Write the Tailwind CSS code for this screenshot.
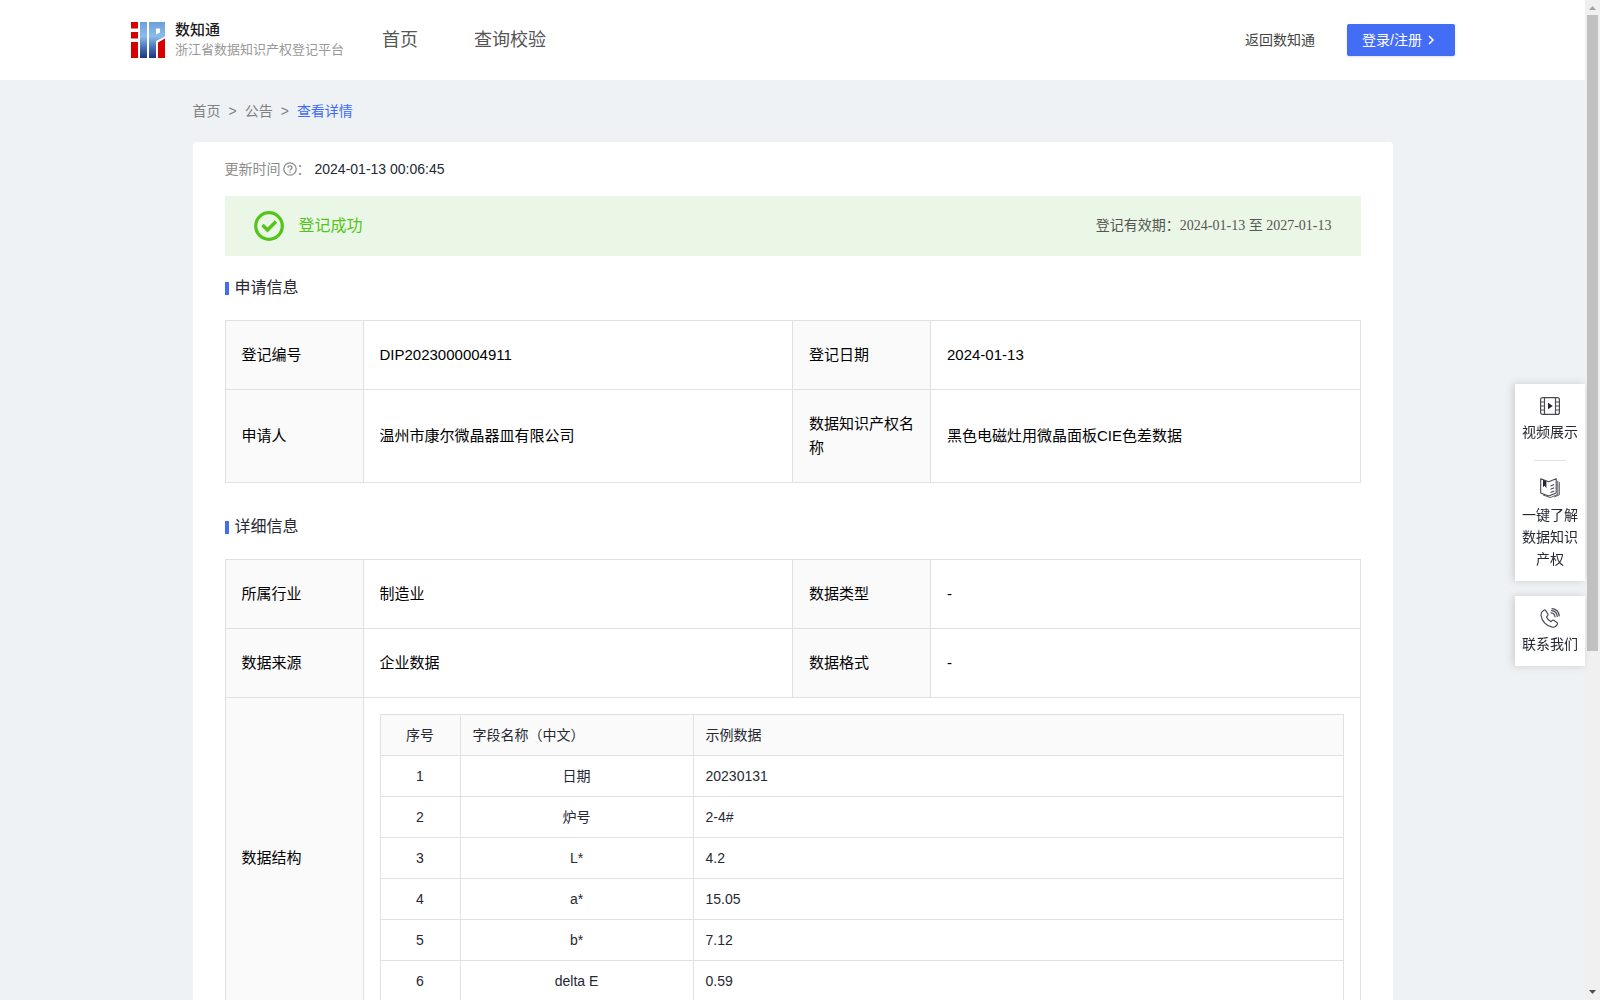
<!DOCTYPE html>
<html lang="zh-CN">
<head>
    <meta charset="UTF-8">
    <meta name="viewport" content="width=device-width, initial-scale=1.0">
    <title>查看详情 | 数知通</title>
    <script src="https://cdn.jsdelivr.net/npm/@tailwindcss/browser@4"></script>
</head>
<body class="flex h-screen overflow-hidden bg-[#eef2f5] text-sm text-[#262833] font-['Liberation_Sans','Noto_Sans_CJK_SC',sans-serif]">
    <div class="flex-1 min-w-0 overflow-y-auto [scrollbar-width:none]">
        <!-- Header -->
        <header class="flex items-center h-20 bg-white px-[130px]">
            <a href="#" class="flex items-center">
                <svg class="w-9 h-9" viewBox="-1 0 36 36" aria-hidden="true">
                    <defs>
                        <linearGradient id="logo-blue" x1="0" y1="0" x2="0" y2="36" gradientUnits="userSpaceOnUse">
                            <stop offset="0" stop-color="#6d9fd8"/>
                            <stop offset="0.4" stop-color="#8bbcec"/>
                            <stop offset="0.7" stop-color="#4a73b5"/>
                            <stop offset="1" stop-color="#1f3480"/>
                        </linearGradient>
                    </defs>
                    <path fill="#d60000" d="M0 0h7v6.500H0zM0 10h7v6.500H0zM0 20h7v16H0zM27 20.500L34 16.500V36H27z"/>
                    <path fill="url(#logo-blue)" fill-rule="evenodd" d="M9 0h7v36H9zM18 0h16v14.500l-9 4.500V36H18zM25 6.500v6l4-2v-4z"/>
                </svg>
                <span class="ml-[9px]">
                    <span class="block text-[15px] leading-5 font-medium text-[#1c1c1c]">数知通</span>
                    <span class="block text-[13px] leading-5 text-[#999]">浙江省数据知识产权登记平台</span>
                </span>
            </a>
            <nav class="flex gap-14 ml-[38px] text-lg text-[#555]">
                <a href="#">首页</a>
                <a href="#">查询校验</a>
            </nav>
            <div class="flex items-center gap-8 ml-auto">
                <a href="#" class="text-[#444]">返回数知通</a>
                <button type="button" class="flex items-center gap-1 w-[108px] h-8 pl-[15px] rounded-xs bg-[#446df6] text-white shadow-sm">
                    登录/注册
                    <svg class="w-3 h-3" viewBox="0 0 12 12" fill="none" stroke="currentColor" stroke-width="1.500" aria-hidden="true"><path d="M3 2l4 4-4 4"/></svg>
                </button>
            </div>
        </header>

        <!-- Main Content -->
        <main class="max-w-[1200px] mx-auto">
            <nav class="flex items-center gap-2 h-[62px] text-[#808080]">
                <a href="#">首页</a>
                <span>&gt;</span>
                <a href="#">公告</a>
                <span>&gt;</span>
                <a href="#" class="text-[#3d6bf5]">查看详情</a>
            </nav>

            <div class="bg-white rounded-sm px-8 pt-4 pb-8">
                <p class="flex items-center leading-[22px]">
                    <span class="text-[#8c8c8c]">更新时间</span>
                    <svg class="w-[14px] h-[14px] ml-[2px] text-[#8c8c8c]" viewBox="0 0 14 14" fill="none" stroke="currentColor" stroke-width="1.300" aria-hidden="true">
                        <circle cx="7" cy="7" r="6.200"/>
                        <path d="M5 5.700c0-2.500 4-2.500 4 0 0 1.300-2 1.300-2 2.800M7 9.400v1.400"/>
                    </svg>
                    <span class="text-[#8c8c8c]">：</span>
                    <span class="ml-1">2024-01-13 00:06:45</span>
                </p>

                <!-- Status -->
                <div class="flex items-center h-[60px] mt-4 px-[29px] bg-[#ebf7e6]">
                    <svg class="w-[30px] h-[30px] text-[#52c41a]" viewBox="0 0 30 30" fill="none" stroke="currentColor" aria-hidden="true">
                        <circle cx="15" cy="15" r="13.300" stroke-width="3.200"/>
                        <path d="M8.500 14l5 5 8.500-8.500" stroke-width="3.400"/>
                    </svg>
                    <span class="ml-[15px] text-base text-[#52c41a]">登记成功</span>
                    <span class="ml-auto text-[#555] font-['Liberation_Serif','Noto_Sans_CJK_SC',serif]">登记有效期：2024-01-13 至 2027-01-13</span>
                </div>

                <!-- Application -->
                <section class="mt-5">
                    <h2 class="flex items-center gap-[6px] text-base leading-6">
                        <span class="w-1 h-[13px] bg-[#446df6]"></span>申请信息
                    </h2>
                    <table class="w-full mt-5 table-fixed border-collapse text-[15px] leading-6 text-black">
                        <colgroup>
                            <col class="w-[138px]">
                            <col>
                            <col class="w-[138px]">
                            <col>
                        </colgroup>
                        <tbody>
                            <tr>
                                <th scope="row" class="border border-[#e1e1e1] bg-[#fafafa] px-4 py-[22px] text-left font-normal">登记编号</th>
                                <td class="border border-[#e1e1e1] px-4 py-[22px]">DIP2023000004911</td>
                                <th scope="row" class="border border-[#e1e1e1] bg-[#fafafa] px-4 py-[22px] text-left font-normal">登记日期</th>
                                <td class="border border-[#e1e1e1] px-4 py-[22px]">2024-01-13</td>
                            </tr>
                            <tr>
                                <th scope="row" class="border border-[#e1e1e1] bg-[#fafafa] px-4 py-[22px] text-left font-normal">申请人</th>
                                <td class="border border-[#e1e1e1] px-4 py-[22px]">温州市康尔微晶器皿有限公司</td>
                                <th scope="row" class="border border-[#e1e1e1] bg-[#fafafa] pl-4 pr-3 py-[22px] text-left font-normal">数据知识产权名称</th>
                                <td class="border border-[#e1e1e1] px-4 py-[22px]">黑色电磁灶用微晶面板CIE色差数据</td>
                            </tr>
                        </tbody>
                    </table>
                </section>

                <!-- Details -->
                <section class="mt-8">
                    <h2 class="flex items-center gap-[6px] text-base leading-6">
                        <span class="w-1 h-[13px] bg-[#446df6]"></span>详细信息
                    </h2>
                    <table class="w-full mt-5 table-fixed border-collapse text-[15px] leading-6 text-black">
                        <colgroup>
                            <col class="w-[138px]">
                            <col>
                            <col class="w-[138px]">
                            <col>
                        </colgroup>
                        <tbody>
                            <tr>
                                <th scope="row" class="border border-[#e1e1e1] bg-[#fafafa] px-4 py-[22px] text-left font-normal">所属行业</th>
                                <td class="border border-[#e1e1e1] px-4 py-[22px]">制造业</td>
                                <th scope="row" class="border border-[#e1e1e1] bg-[#fafafa] px-4 py-[22px] text-left font-normal">数据类型</th>
                                <td class="border border-[#e1e1e1] px-4 py-[22px]">-</td>
                            </tr>
                            <tr>
                                <th scope="row" class="border border-[#e1e1e1] bg-[#fafafa] px-4 py-[22px] text-left font-normal">数据来源</th>
                                <td class="border border-[#e1e1e1] px-4 py-[22px]">企业数据</td>
                                <th scope="row" class="border border-[#e1e1e1] bg-[#fafafa] px-4 py-[22px] text-left font-normal">数据格式</th>
                                <td class="border border-[#e1e1e1] px-4 py-[22px]">-</td>
                            </tr>
                            <tr>
                                <th scope="row" class="border border-[#e1e1e1] bg-[#fafafa] px-4 text-left font-normal">数据结构</th>
                                <td colspan="3" class="border border-[#e1e1e1] p-4">
                                    <table class="w-full table-fixed border-collapse text-sm/6 text-[#262833]">
                                        <thead class="bg-[#fafafa]">
                                            <tr>
                                                <th scope="col" class="w-20 border border-[#e1e1e1] px-3 py-2 font-normal text-center">序号</th>
                                                <th scope="col" class="w-[233px] border border-[#e1e1e1] px-3 py-2 font-normal text-left">字段名称（中文）</th>
                                                <th scope="col" class="border border-[#e1e1e1] px-3 py-2 font-normal text-left">示例数据</th>
                                            </tr>
                                        </thead>
                                        <tbody>
                                            <tr>
                                                <td class="border border-[#e1e1e1] px-3 py-2 text-center">1</td>
                                                <td class="border border-[#e1e1e1] px-3 py-2 text-center">日期</td>
                                                <td class="border border-[#e1e1e1] px-3 py-2">20230131</td>
                                            </tr>
                                            <tr>
                                                <td class="border border-[#e1e1e1] px-3 py-2 text-center">2</td>
                                                <td class="border border-[#e1e1e1] px-3 py-2 text-center">炉号</td>
                                                <td class="border border-[#e1e1e1] px-3 py-2">2-4#</td>
                                            </tr>
                                            <tr>
                                                <td class="border border-[#e1e1e1] px-3 py-2 text-center">3</td>
                                                <td class="border border-[#e1e1e1] px-3 py-2 text-center">L*</td>
                                                <td class="border border-[#e1e1e1] px-3 py-2">4.2</td>
                                            </tr>
                                            <tr>
                                                <td class="border border-[#e1e1e1] px-3 py-2 text-center">4</td>
                                                <td class="border border-[#e1e1e1] px-3 py-2 text-center">a*</td>
                                                <td class="border border-[#e1e1e1] px-3 py-2">15.05</td>
                                            </tr>
                                            <tr>
                                                <td class="border border-[#e1e1e1] px-3 py-2 text-center">5</td>
                                                <td class="border border-[#e1e1e1] px-3 py-2 text-center">b*</td>
                                                <td class="border border-[#e1e1e1] px-3 py-2">7.12</td>
                                            </tr>
                                            <tr>
                                                <td class="border border-[#e1e1e1] px-3 py-2 text-center">6</td>
                                                <td class="border border-[#e1e1e1] px-3 py-2 text-center">delta E</td>
                                                <td class="border border-[#e1e1e1] px-3 py-2">0.59</td>
                                            </tr>
                                        </tbody>
                                    </table>
                                </td>
                            </tr>
                        </tbody>
                    </table>
                </section>
            </div>
        </main>
    </div>

    <!-- Floating shortcuts -->
    <aside class="fixed right-[15px] top-96 flex flex-col gap-[15px] w-[70px] text-center leading-[22px]">
        <div class="flex flex-col items-center bg-white pt-3 pb-[11px] shadow-[-2px_0_8px_rgba(0,0,0,0.15)]">
            <a href="#" class="flex flex-col items-center">
                <svg class="w-5 h-5" viewBox="0 0 20 20" fill="none" stroke="#4a4a50" stroke-width="1.200" aria-hidden="true">
                    <rect x="0.600" y="1.600" width="18.800" height="16.800" rx="2"/>
                    <path d="M4.500 1.600v16.800M15.500 1.600v16.800M0.600 6h3.900M0.600 10h3.900M0.600 14h3.900M15.500 6h3.900M15.500 10h3.900M15.500 14h3.900"/>
                    <path d="M8 6.800v6.400l4.800-3.200z" fill="#262833" stroke="none"/>
                </svg>
                <span class="mt-[5px]">视频展示</span>
            </a>
            <span class="w-8 h-px my-[17px] bg-[#e1e1e1]"></span>
            <a href="#" class="flex flex-col items-center">
                <svg class="w-5 h-5" viewBox="0 0 20 20" fill="none" stroke="#4a4a50" stroke-width="1.100" stroke-linejoin="round" aria-hidden="true">
                    <path d="M0.700 0.800l8 3 7.500-3v14.200l-7.500 3-8-3z"/>
                    <path d="M17.800 2.800v13.600l-6 2.600-2 .5-7-2.600M19.300 4.200v12.600l-5 2.200" stroke-width="0.900"/>
                    <path d="M10.500 8l3.700-1.500M10.500 11.300l3.700-1.500M10.500 14.600l3.700-1.500"/>
                    <path d="M3 1.800v7.400l1.700-1.400 1.700 2.400V3.200z" fill="#262833" stroke="none"/>
                </svg>
                <span class="w-14 mt-[6px]">一键了解数据知识产权</span>
            </a>
        </div>
        <a href="#" class="flex flex-col items-center bg-white pt-3 pb-[11px] shadow-[-2px_0_8px_rgba(0,0,0,0.15)]">
            <svg class="w-5 h-5" viewBox="0 0 20 20" fill="none" stroke="#4a4a50" stroke-width="1.200" stroke-linecap="round" stroke-linejoin="round" aria-hidden="true">
                <path d="M3.800 2.200C2 3.400.8 5 1 7.200c.5 5.600 5.800 11.300 11.400 12 2.200.2 4-1 4.900-2.900.3-.8.200-1.400-.4-1.900l-2.700-1.900c-.7-.5-1.500-.4-2.100.2l-1 1c-2-.9-3.700-2.700-4.600-4.800l1-1c.6-.6.700-1.300.2-2.100L5.700 2.600c-.5-.6-1.200-.8-1.900-.4z"/>
                <path d="M11 4.800c2.200.2 3.800 1.800 4 4M11.500 2.600c3.100.3 5.500 2.700 5.800 5.800M12 .7c4 .4 6.800 3.200 7.200 7.200"/>
            </svg>
            <span class="mt-[5px]">联系我们</span>
        </a>
    </aside>

    <!-- Scroll track -->
    <div class="flex flex-col items-center w-[15px] h-screen bg-[#f0f0f0]" aria-hidden="true">
        <svg class="w-[15px] h-[15px]" viewBox="0 0 15 15" fill="#a3a3a3"><path d="M4 10l3.500-4 3.500 4z"/></svg>
        <span class="w-[11px] h-7/11 bg-[#c1c1c1]"></span>
        <svg class="w-[15px] h-[15px] mt-auto" viewBox="0 0 15 15" fill="#505050"><path d="M4 5l3.500 4 3.500-4z"/></svg>
    </div>
</body>
</html>
